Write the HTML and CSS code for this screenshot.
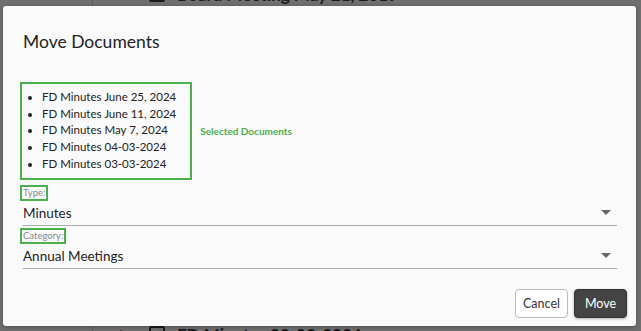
FILE: index.html
```html
<!DOCTYPE html>
<html lang="en">
    <head>
        <meta charset="UTF-8" />
        <meta name="viewport" content="width=device-width, initial-scale=1.0" />
        <title>Move Documents</title>
        <link rel="stylesheet" href="styles.css">
    </head>
    <body>
        <div class="page">
            <div class="doc-row top-row">
                <span class="side-cell"></span>
                <span class="expand">+</span>
                <span class="check"></span>
                <span class="doc-name">Board Meeting May 21, 2019</span>
            </div>
            <div class="doc-row bottom-row">
                <span class="side-cell"></span>
                <span class="expand">+</span>
                <span class="check checked">&#10004;</span>
                <span class="doc-name">FD Minutes 02-03-2024</span>
            </div>
        </div>

        <div class="backdrop">
            <div class="modal">
                <h1 class="modal-title">Move Documents</h1>
                <div class="selected">
                    <ul class="doc-list">
                        <li>FD Minutes June 25, 2024</li>
                        <li>FD Minutes June 11, 2024</li>
                        <li>FD Minutes May 7, 2024</li>
                        <li>FD Minutes 04-03-2024</li>
                        <li>FD Minutes 03-03-2024</li>
                    </ul>
                    <span class="selected-label">Selected Documents</span>
                </div>
                <div class="field">
                    <label class="field-label">Type:</label>
                    <div class="select">
                        <span>Minutes</span>
                        <span class="arrow"></span>
                    </div>
                </div>
                <div class="field">
                    <label class="field-label">Category:</label>
                    <div class="select">
                        <span>Annual Meetings</span>
                        <span class="arrow"></span>
                    </div>
                </div>
                <div class="actions">
                    <button class="btn cancel">Cancel</button>
                    <button class="btn primary">Move</button>
                </div>
            </div>
        </div>
    </body>
</html>
```

FILE: styles.css
```css
body {
    font-family: Lato, "Open Sans", sans-serif;
    background-color: #6f6f6f;
    margin: 0;
    padding: 0;
    width: 641px;
    height: 331px;
    overflow: hidden;
    position: relative;
}
.page {
    height: 331px;
    display: flex;
    flex-direction: column;
    justify-content: space-between;
}
.doc-row {
    display: flex;
    align-items: center;
    height: 26px;
    color: #1a1a1a;
    font-size: 17px;
    font-weight: bold;
}
.top-row {
    margin-top: -19px;
}
.bottom-row {
    margin-bottom: -16px;
}
.side-cell {
    width: 92px;
    height: 100%;
    border-right: 1px solid #5f5f5f;
}
.expand {
    width: 56px;
    text-align: center;
    font-weight: normal;
}
.check {
    width: 12px;
    height: 12px;
    border: 2px solid #1a1a1a;
    border-radius: 2px;
    margin-right: 12px;
    font-size: 11px;
    line-height: 12px;
    text-align: center;
}
.backdrop {
    position: absolute;
    top: 0;
    left: 0;
    right: 0;
    bottom: 0;
    padding: 6px 5px 5px 3px;
    display: flex;
}
.modal {
    flex: 1;
    background-color: #fafafa;
    border-radius: 3px;
    padding: 0 19px 0 17px;
    display: flex;
    flex-direction: column;
    box-shadow: 0 1px 4px rgba(0, 0, 0, 0.3);
}
.modal-title {
    margin: 24px 0 0 3px;
    font-size: 17.5px;
    font-weight: normal;
    color: #222;
    line-height: 24px;
}
.selected {
    display: flex;
    align-items: center;
    margin-top: 28px;
}
.doc-list {
    margin: 0;
    padding: 5px 14px 5px 20px;
    border: 2px solid #4caf50;
    list-style: disc;
    font-size: 11.5px;
    line-height: 16.7px;
    color: #222;
    white-space: nowrap;
}
.selected-label {
    margin-left: 8px;
    color: #4cae4c;
    font-size: 10px;
    font-weight: bold;
}
.field {
    display: flex;
    flex-direction: column;
    align-items: flex-start;
}
.field-label {
    margin-top: 5px;
    border: 2px solid #4caf50;
    padding: 0 1px;
    font-size: 9.5px;
    line-height: 12px;
    color: #888;
}
.field + .field .field-label {
    margin-top: 2px;
}
.select {
    align-self: stretch;
    display: flex;
    justify-content: space-between;
    align-items: center;
    margin: 0 0 0 3px;
    height: 24px;
    border-bottom: 1px solid #aaa;
    font-size: 13.5px;
    color: #222;
}
.arrow {
    width: 0;
    height: 0;
    border-left: 5px solid transparent;
    border-right: 5px solid transparent;
    border-top: 5px solid #666;
    margin-right: 6px;
}
.actions {
    margin-top: auto;
    margin-bottom: 8px;
    margin-right: -10px;
    display: flex;
    justify-content: flex-end;
    gap: 6px;
}
.btn {
    font-family: inherit;
    font-size: 12.5px;
    width: 53px;
    height: 29px;
    padding: 0;
    border-radius: 4px;
    cursor: pointer;
}
.cancel {
    background-color: #fff;
    border: 1px solid #bbb;
    color: #333;
}
.primary {
    background-color: #444;
    border: 1px solid #333;
    color: #fff;
    box-shadow: 0 1px 3px rgba(0, 0, 0, 0.3);
}
```
